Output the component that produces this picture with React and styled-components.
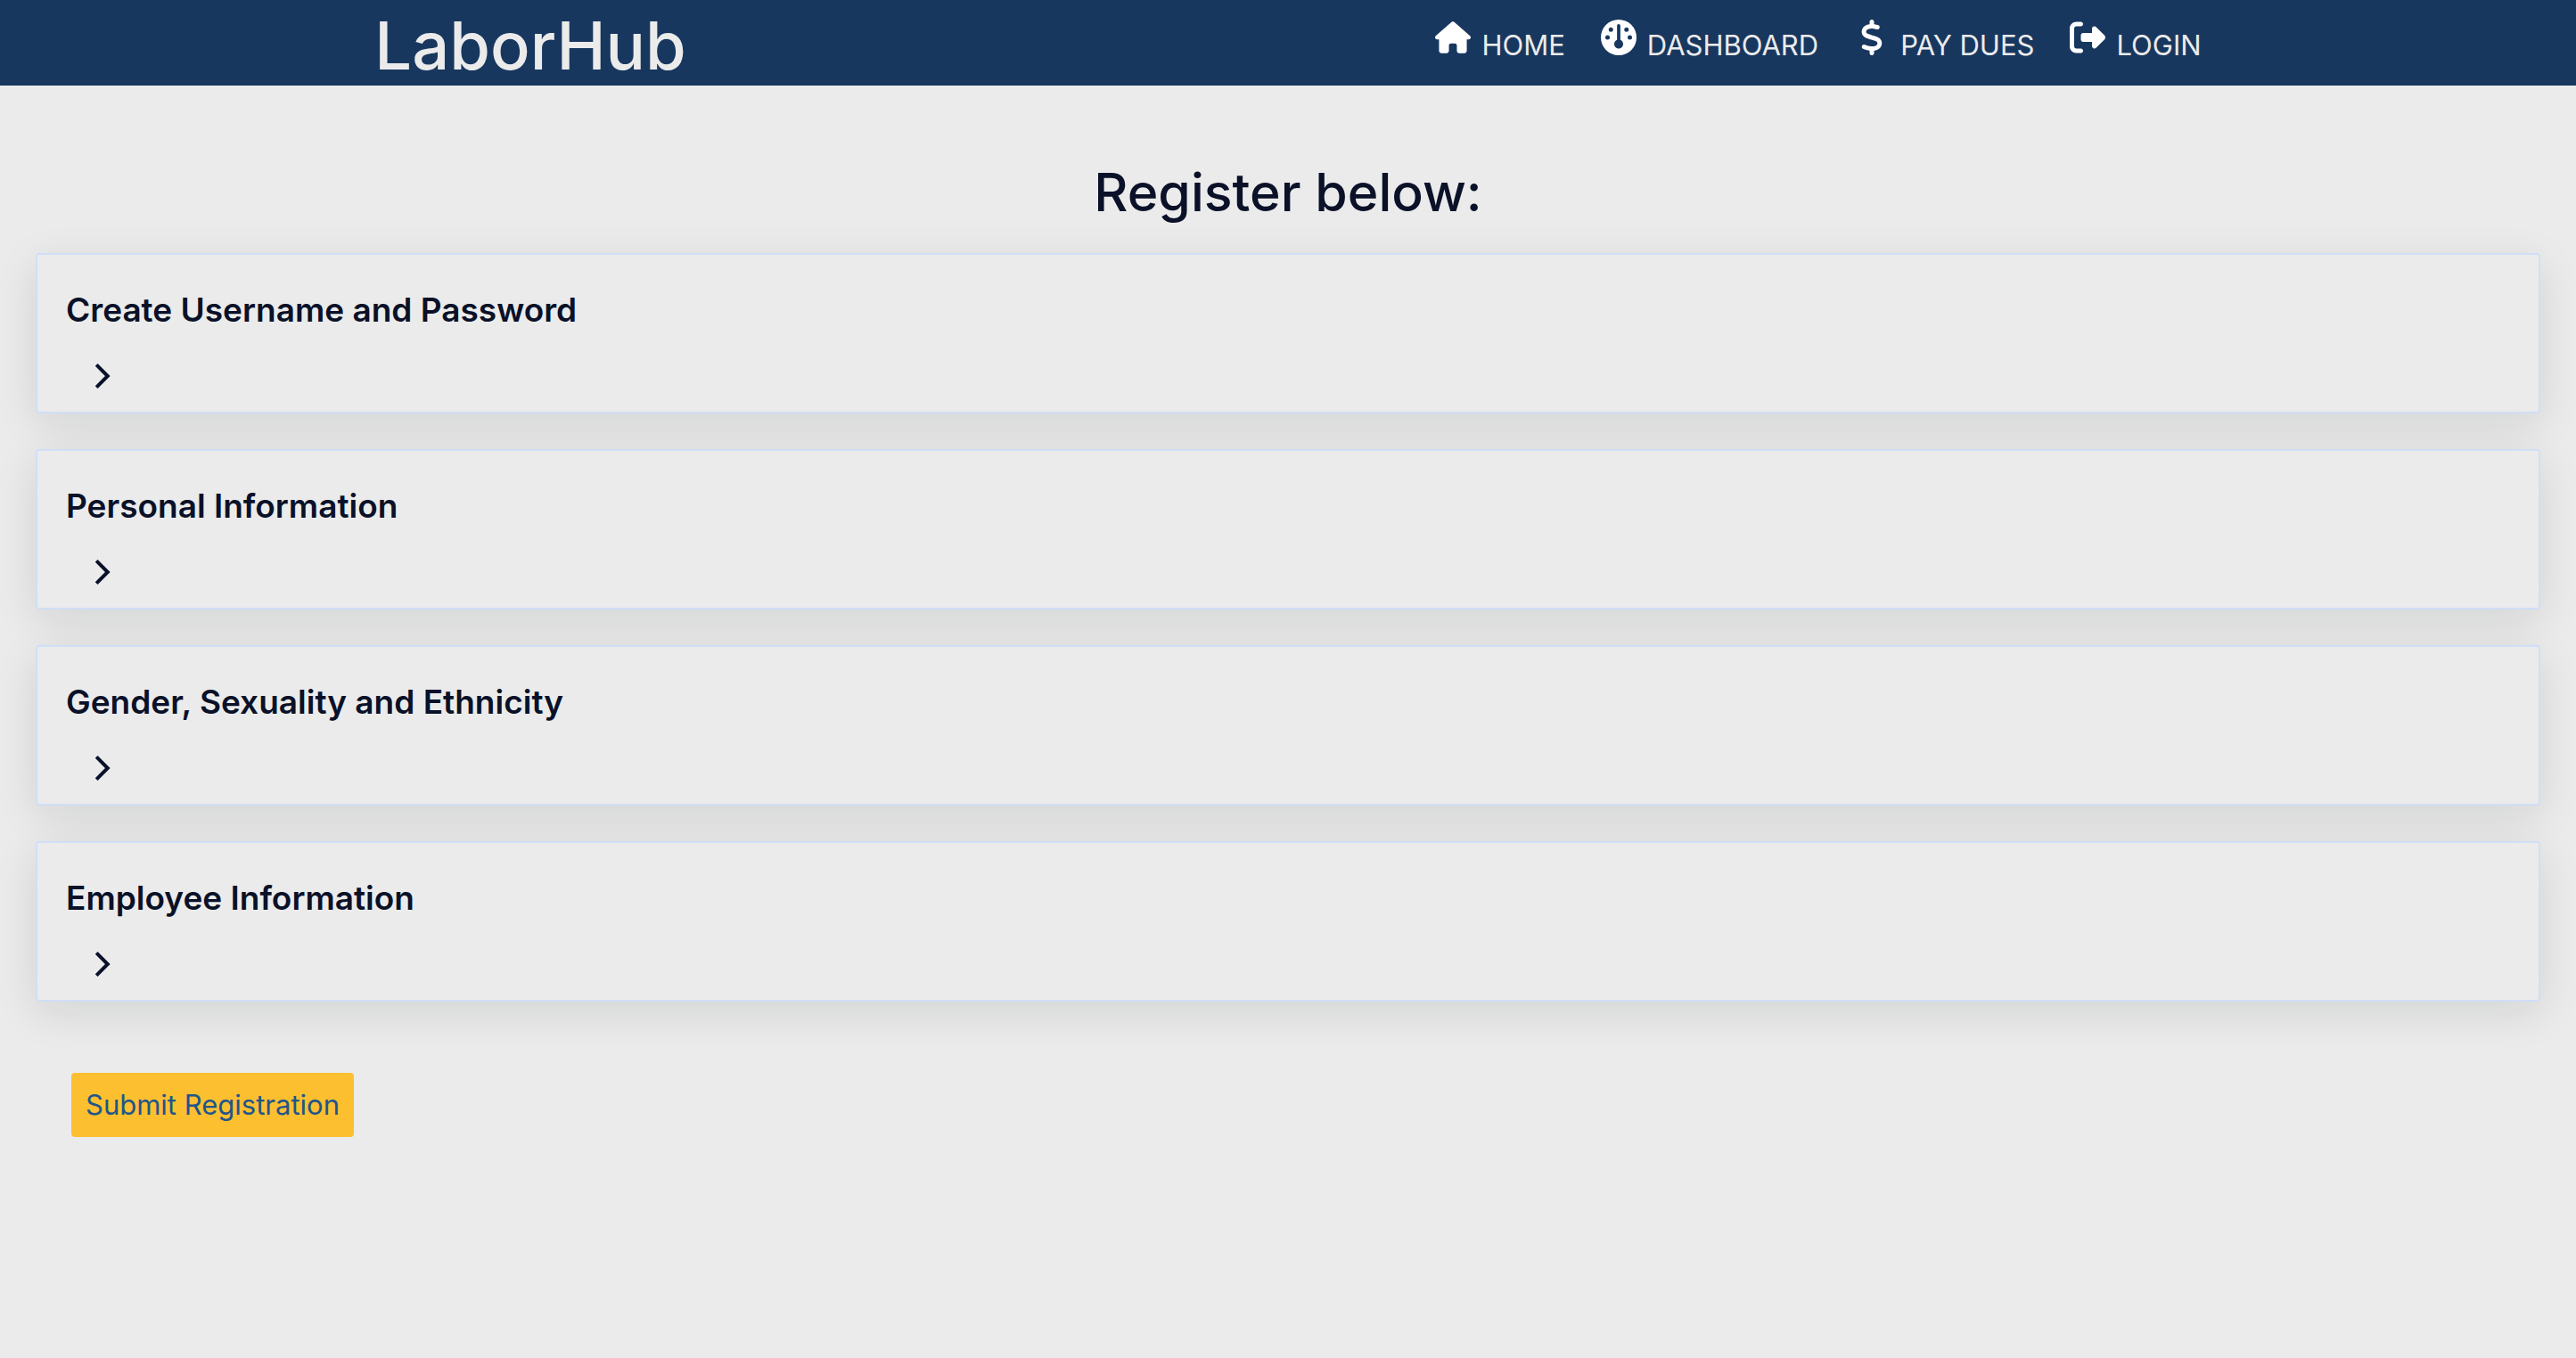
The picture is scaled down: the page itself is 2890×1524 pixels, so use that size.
import React from "react";
import styled, { createGlobalStyle } from "styled-components";
import { FaHouse, FaGauge, FaDollarSign, FaRightFromBracket } from "react-icons/fa6";

const GlobalStyle = createGlobalStyle`
  *, *::before, *::after { box-sizing: border-box; }
  body {
    margin: 0;
    background: #ebebeb;
    color: #0a1128;
    font-family: Inter, "Liberation Sans", sans-serif;
    font-size: 32px;
    line-height: 48px;
  }
`;

const Header = styled.header`
  display: flex;
  justify-content: space-around;
  align-items: flex-start;
  height: 96px;
  background: #18375f;
`;

const Logo = styled.a`
  padding-top: 6px;
  color: #ebebeb;
  font-size: 74px;
  font-weight: 500;
  line-height: 90px;
  text-decoration: none;
`;

const Nav = styled.nav`
  display: flex;
  gap: 40px;
  padding-top: 22px;
`;

const NavLink = styled.a`
  display: flex;
  align-items: flex-start;
  gap: 12px;
  color: #ebebeb;
  font-size: 31px;
  line-height: 58px;
  text-decoration: none;
  text-transform: uppercase;

  svg {
    width: 40px;
    height: 40px;
    color: #fff;
  }
`;

const Main = styled.main`
  padding: 80px 40px;
`;

const Title = styled.h1`
  margin: 0 0 28px;
  font-size: 59px;
  font-weight: 500;
  line-height: 80px;
  text-align: center;
`;

const Form = styled.form`
  display: flex;
  flex-direction: column;
  gap: 40px;
`;

const Card = styled.section`
  padding: 36px 32px 8px;
  border: 2px solid #d0dff7;
  border-radius: 4px;
  background: #ebebeb;
  box-shadow: 0 12px 48px rgba(10, 17, 28, 0.11);
`;

const CardTitle = styled.h2`
  margin: 0;
  font-size: 37px;
  font-weight: 600;
  line-height: 52px;
`;

const Toggle = styled.button`
  display: flex;
  margin: 24px 0 8px;
  padding: 8px 24px;
  border: 0;
  background: none;
  color: inherit;
  cursor: pointer;
`;

const Submit = styled.button`
  align-self: flex-start;
  margin: 40px;
  padding: 12px 16px;
  border: 0;
  border-radius: 4px;
  background: #fcbf30;
  color: #20558a;
  font: inherit;
  font-size: 31px;
  cursor: pointer;
`;

const Chevron = () => (
  <svg width="32" height="32" viewBox="0 0 32 32" fill="none" stroke="currentColor" strokeWidth="4" aria-hidden="true">
    <path d="M10.2 3.4 22.8 16 10.2 28.6" />
  </svg>
);

const links = [
  { label: "Home", Icon: FaHouse },
  { label: "Dashboard", Icon: FaGauge },
  { label: "Pay Dues", Icon: FaDollarSign },
  { label: "Login", Icon: FaRightFromBracket },
];

const sections = [
  "Create Username and Password",
  "Personal Information",
  "Gender, Sexuality and Ethnicity",
  "Employee Information",
];

export default function App() {
  return (
    <>
      <GlobalStyle />
      <Header>
        <Logo href="#">LaborHub</Logo>
        <Nav>
          {links.map(({ label, Icon }) => (
            <NavLink key={label} href="#">
              <Icon aria-hidden="true" />
              <span>{label}</span>
            </NavLink>
          ))}
        </Nav>
      </Header>
      <Main>
        <Title>Register below:</Title>
        <Form onSubmit={(e) => e.preventDefault()}>
          {sections.map((name) => (
            <Card key={name}>
              <CardTitle>{name}</CardTitle>
              <Toggle type="button" aria-label={`Expand ${name}`}>
                <Chevron />
              </Toggle>
            </Card>
          ))}
          <Submit type="submit">Submit Registration</Submit>
        </Form>
      </Main>
    </>
  );
}
